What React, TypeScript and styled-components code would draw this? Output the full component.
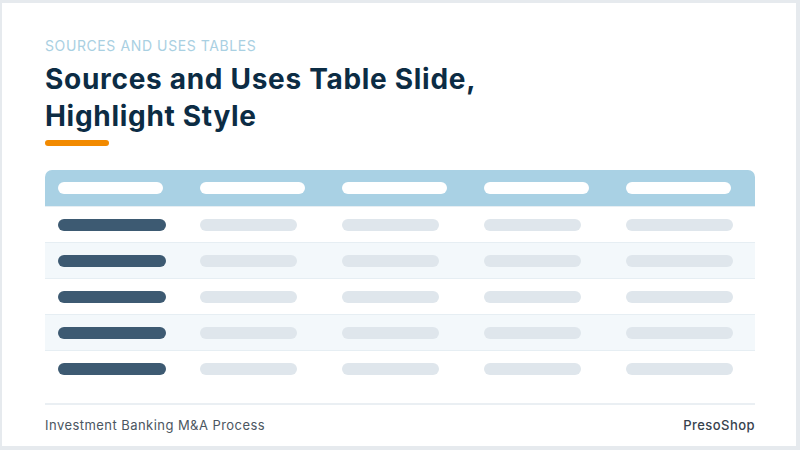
import React from "react";
import styled, { createGlobalStyle } from "styled-components";

const GlobalStyle = createGlobalStyle`
  html, body {
    margin: 0;
    padding: 0;
    background: #e6eaee;
  }
  body {
    font-family: Inter, "Open Sans", sans-serif;
  }
`;

const Frame = styled.div`
  width: 800px;
  height: 450px;
  box-sizing: border-box;
  padding: 3px 4px 4px 2px;
`;

const Slide = styled.div`
  height: 100%;
  box-sizing: border-box;
  background: #ffffff;
  padding: 34px 41px 0 43px;
  display: flex;
  flex-direction: column;
`;

const Eyebrow = styled.div`
  font-size: 14px;
  line-height: 18px;
  color: #a9d0e2;
  letter-spacing: 0.6px;
  text-transform: uppercase;
`;

const Title = styled.h1`
  margin: 6px 0 0;
  font-size: 28px;
  line-height: 37px;
  font-weight: 700;
  color: #0c2c44;
  letter-spacing: 0.7px;
`;

const Accent = styled.div`
  margin-top: 5px;
  width: 64px;
  height: 6px;
  border-radius: 3px;
  background: #f28a00;
`;

const Table = styled.div`
  margin-top: 24px;
  display: flex;
  flex-direction: column;
`;

const Row = styled.div<{ $head?: boolean; $shade?: boolean }>`
  display: grid;
  grid-template-columns: repeat(5, 1fr);
  align-items: center;
  height: 36px;
  box-sizing: border-box;
  background: ${(p) => (p.$head ? "#a9d1e4" : p.$shade ? "#f3f8fb" : "#ffffff")};
  border-radius: ${(p) => (p.$head ? "7px 7px 0 0" : "0")};
  border-top: ${(p) => (p.$head ? "none" : "1px solid #e6eef3")};
`;

const Cell = styled.div`
  padding-left: 13px;
`;

type BarKind = "head" | "label" | "value";

const Bar = styled.div<{ $kind: BarKind; $wide?: boolean }>`
  height: 12px;
  border-radius: 6px;
  width: ${(p) =>
    p.$kind === "head" ? 105 : p.$kind === "label" ? 108 : p.$wide ? 107 : 97}px;
  background: ${(p) =>
    p.$kind === "head" ? "#ffffff" : p.$kind === "label" ? "#3d5a72" : "#dfe6ec"};
`;

const Footer = styled.div`
  margin-top: 17px;
  border-top: 2px solid #eaeff3;
  padding-top: 10px;
  display: flex;
  justify-content: space-between;
  font-size: 13px;
  line-height: 20px;
  letter-spacing: 0.45px;
`;

const Course = styled.span`
  color: #4b5661;
`;

const Brand = styled.span`
  color: #37424d;
  font-weight: 500;
`;

const columns = [0, 1, 2, 3, 4];
const rows = [0, 1, 2, 3, 4];

export default function App() {
  return (
    <>
      <GlobalStyle />
      <Frame>
        <Slide>
          <Eyebrow>Sources and Uses Tables</Eyebrow>
          <Title>
            Sources and Uses Table Slide,
            <br />
            Highlight Style
          </Title>
          <Accent />
          <Table>
            <Row $head>
              {columns.map((c) => (
                <Cell key={c}>
                  <Bar $kind="head" />
                </Cell>
              ))}
            </Row>
            {rows.map((r) => (
              <Row key={r} $shade={r % 2 === 1}>
                {columns.map((c) => (
                  <Cell key={c}>
                    <Bar $kind={c === 0 ? "label" : "value"} $wide={c === 4} />
                  </Cell>
                ))}
              </Row>
            ))}
          </Table>
          <Footer>
            <Course>Investment Banking M&amp;A Process</Course>
            <Brand>PresoShop</Brand>
          </Footer>
        </Slide>
      </Frame>
    </>
  );
}
